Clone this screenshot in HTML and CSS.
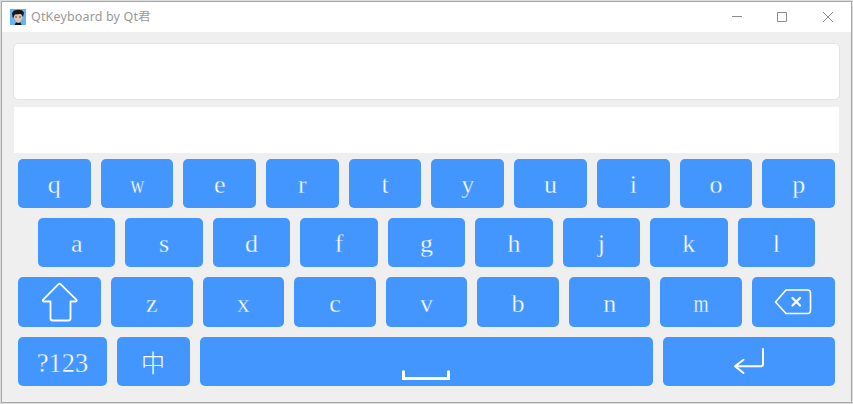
FILE: index.html
```html
<!DOCTYPE html>
<html lang="zh">
<head>
<meta charset="utf-8">
<title>QtKeyboard by Qt君</title>
<link rel="stylesheet" href="styles.css">
</head>
<body>
<div class="window">
  <header class="titlebar">
    <svg class="avatar" width="16" height="16" viewBox="0 0 16 16">
      <rect width="16" height="16" fill="#66b3f7"/>
      <path d="M4.500 16 6 13.500 10.500 13.500 11.500 16Z" fill="#111"/>
      <path d="M4 5H12.500V9L10.500 12.500 8.500 14 6 12.500 4 9Z" fill="#e3c3aa"/>
      <path d="M2.500 8 2 4 4 1.500 8 .8 12 1.200 14 3.500 13 8 12 6.500 11 5 5 5.500 4 7 3.500 9Z" fill="#17181a"/>
      <path d="M5 8h2M9 8h2" stroke="#4c3d35" stroke-width=".9"/>
    </svg>
    <span class="title">QtKeyboard by Qt君</span>
    <svg class="controls" width="104" height="12" viewBox="0 0 104 12" fill="none" stroke="#8c8c8c">
      <path d="M0 5.500H10M45.500 1.500H54.500V10.500H45.500ZM91 1 101 11M101 1 91 11"/>
    </svg>
  </header>
  <main class="body">
    <div class="input"></div>
    <div class="candidates"></div>
    <div class="keys">
      <div class="row">
        <div class="key">q</div><div class="key"><span class="narrow">w</span></div><div class="key">e</div><div class="key">r</div><div class="key">t</div><div class="key">y</div><div class="key">u</div><div class="key">i</div><div class="key">o</div><div class="key">p</div>
      </div>
      <div class="row inset">
        <div class="key">a</div><div class="key">s</div><div class="key">d</div><div class="key">f</div><div class="key">g</div><div class="key">h</div><div class="key">j</div><div class="key">k</div><div class="key">l</div>
      </div>
      <div class="row third">
        <div class="key icon"><svg width="38" height="40" viewBox="0 0 38 40" fill="none" stroke="#fff" stroke-width="1.800" stroke-linejoin="round"><path d="M17.500 2.200Q18.500 1.200 19.500 2.200L35.300 17.600Q36.300 19.300 34.500 19.500H29.500V36.500Q29.500 38.500 27.500 38.500H11.500Q9.500 38.500 9.500 36.500V19.500H3Q1 19.300 2.200 17.600Z"/></svg></div>
        <div class="key">z</div><div class="key">x</div><div class="key">c</div><div class="key">v</div><div class="key">b</div><div class="key">n</div><div class="key"><span class="narrow">m</span></div>
        <div class="key icon"><svg width="38" height="26" viewBox="0 0 38 26" fill="none" stroke="#fff" stroke-width="1.600" stroke-linejoin="round"><path d="M12 1H33.500Q36.500 1 36.500 4V21.500Q36.500 24.500 33.500 24.500H12L1.500 13Z"/><path d="M18.500 9 26 16.500M26 9 18.500 16.500" stroke-width="2.200" stroke-linecap="round"/></svg></div>
      </div>
      <div class="row bottom">
        <div class="key digits">?123</div>
        <div class="key cjk">中</div>
        <div class="key icon space"><svg width="48" height="10" viewBox="0 0 48 10"><path d="M0 1Q1.500-.5 3 1V7H45V1Q46.500-.5 48 1V10H0Z" fill="#fff"/></svg></div>
        <div class="key icon return"><svg width="32" height="28" viewBox="0 0 32 28" fill="none" stroke="#fff" stroke-width="2" stroke-linecap="round" stroke-linejoin="round"><path d="M30 2V17.500Q30 19.300 28 19.300H2M10.500 12.800 2 19.300 10.500 26"/></svg></div>
      </div>
    </div>
  </main>
</div>
</body>
</html>
```
FILE: styles.css
```css
* { box-sizing: border-box; }

body {
  margin: 0;
  width: 853px;
  height: 404px;
  padding: 1px;
  background: #dcdcdc;
  overflow: hidden;
}

.window {
  width: 851px;
  height: 402px;
  border: 1px solid #a7a7a7;
  background: #efefef;
}

.titlebar {
  display: flex;
  align-items: center;
  height: 30px;
  padding: 0 15px 0 8px;
  background: #fff;
}

.title {
  margin-left: 5px;
  font: 12.500px/28px "Noto Sans", "Noto Sans CJK SC", sans-serif;
  letter-spacing: .15px;
  color: #999;
}

.controls { margin-left: auto; }

.body { padding: 11px 11px 0; }

.input {
  height: 57px;
  border: 1px solid #dce4ea;
  border-radius: 5px;
  background: #fff;
}

.candidates {
  height: 46px;
  margin: 7px 1px 6px;
  background: #fff;
}

.keys {
  display: grid;
  grid-template-rows: 49px 49px 50px 49px;
  row-gap: 10px;
  padding: 0 5px;
}

.row {
  display: grid;
  grid-auto-flow: column;
  grid-auto-columns: minmax(0, 1fr);
  column-gap: 10px;
}

.inset { padding: 0 20px; }

.third { grid-template-columns: 83px repeat(7, minmax(0, 1fr)) 83px; }

.bottom { grid-template-columns: 89px 73px 453px 172px; }

.key {
  display: flex;
  align-items: center;
  justify-content: center;
  padding-top: 3px;
  border-radius: 5px;
  background: #4496ff;
  color: #fff;
  font: 26px/30px "Liberation Serif", "Noto Sans CJK SC", serif;
  -webkit-text-stroke: .35px #4496ff;
}

.narrow { transform: scaleX(.75); }

.icon { padding-top: 0; }

.space { align-items: flex-end; padding: 0 2px 6px 0; }

.return { padding-bottom: 1px; }

.digits { font-size: 26.500px; }

.cjk {
  padding: 0 1px 0 0;
  font-family: "Noto Sans CJK SC", sans-serif;
  font-size: 24px;
  font-weight: 300;
  -webkit-text-stroke: 0;
}
```
